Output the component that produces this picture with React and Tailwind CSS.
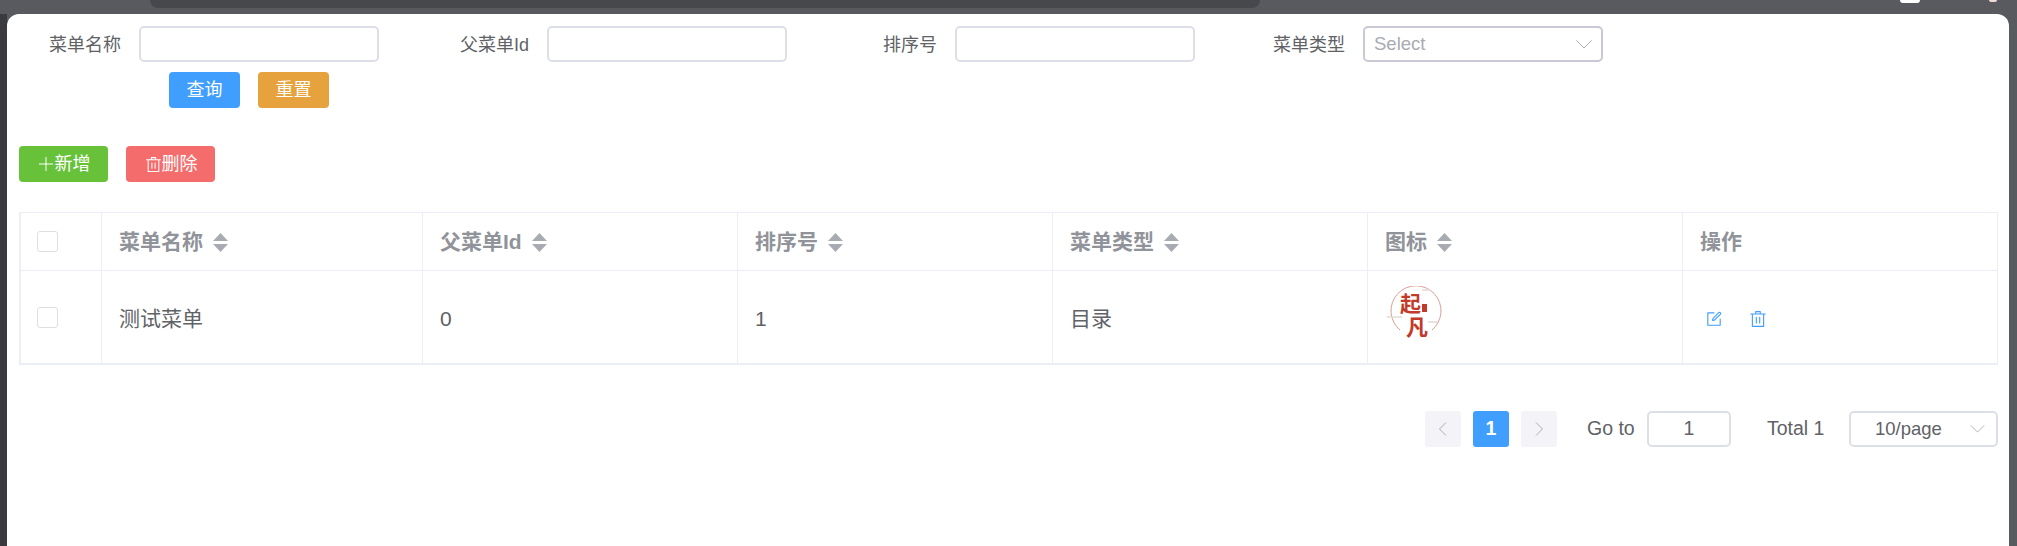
const font = "font-['Liberation_Sans','Noto_Sans_CJK_SC',sans-serif]";

const columns = [
  { name: "菜单名称", value: "测试菜单", width: "w-[321px]" },
  { name: "父菜单Id", value: "0", width: "w-[315px]" },
  { name: "排序号", value: "1", width: "w-[315px]" },
  { name: "菜单类型", value: "目录", width: "w-[315px]" },
];

function Chevron({ className }) {
  return (
    <svg className={className} viewBox="0 0 16 9" fill="none" stroke="currentColor" strokeWidth="1">
      <path d="M0.5 0.5 L8 8 L15.5 0.5" />
    </svg>
  );
}

function Arrow({ flip }) {
  return (
    <svg className="h-[14px] w-[8px]" viewBox="0 0 8 14" fill="none" stroke="currentColor" strokeWidth="1">
      <path d={flip ? "M1 0.5 L7.5 7 L1 13.5" : "M7 0.5 L0.5 7 L7 13.5"} />
    </svg>
  );
}

function DeleteIcon({ className }) {
  return (
    <svg className={className} viewBox="0 0 1024 1024" fill="currentColor">
      <path d="M160 256H96a32 32 0 0 1 0-64h256V95.936a32 32 0 0 1 32-32h256a32 32 0 0 1 32 32V192h256a32 32 0 1 1 0 64h-64v672a32 32 0 0 1-32 32H192a32 32 0 0 1-32-32V256zm448-64v-64H416v64h192zM224 896h576V256H224v640zm192-128a32 32 0 0 1-32-32V416a32 32 0 0 1 64 0v320a32 32 0 0 1-32 32zm192 0a32 32 0 0 1-32-32V416a32 32 0 0 1 64 0v320a32 32 0 0 1-32 32z" />
    </svg>
  );
}

function EditIcon({ className }) {
  return (
    <svg className={className} viewBox="0 0 1024 1024" fill="currentColor">
      <path d="M832 512a32 32 0 1 1 64 0v352a32 32 0 0 1-32 32H160a32 32 0 0 1-32-32V160a32 32 0 0 1 32-32h352a32 32 0 0 1 0 64H192v640h640V512z" />
      <path d="m469.952 554.24 52.8-7.552L847.104 222.4a32 32 0 1 0-45.248-45.248L477.44 501.44l-7.552 52.8zm422.4-422.4a96 96 0 0 1 0 135.808l-331.84 331.84a32 32 0 0 1-18.112 9.088L436.8 623.68a32 32 0 0 1-36.224-36.224l15.104-105.6a32 32 0 0 1 9.024-18.112l331.904-331.84a96 96 0 0 1 135.744 0z" />
    </svg>
  );
}

function Field({ label, select }) {
  return (
    <div className="flex items-center">
      <label className="mr-[18px] w-[90px] pt-[2px] text-right text-[18px] text-[#606266]">{label}</label>
      {select ? (
        <div className="flex h-[36px] w-[240px] items-center justify-between rounded-[5px] border-2 border-[#c8c9d4] pl-[9px] pr-[9px] text-[18.5px] text-[#a8abb2]">
          <span>Select</span>
          <Chevron className="h-[9px] w-[16px] text-[#a8abb2]" />
        </div>
      ) : (
        <input className="h-[36px] w-[240px] rounded-[5px] border-2 border-[#dcdfe6] bg-white" />
      )}
    </div>
  );
}

function SortIcon() {
  return (
    <svg className="ml-[10px] h-[19px] w-[15px]" viewBox="0 0 15 19">
      <path d="M7.5 0 L15 8 H0 Z M0 11 H15 L7.5 19 Z" fill="#a8abb2" />
    </svg>
  );
}

function Checkbox() {
  return <span className="block h-[21px] w-[21px] rounded-[3px] border border-[#dcdfe6] bg-white" />;
}

function Logo() {
  return (
    <svg width="62" height="62" viewBox="0 0 62 62">
      <path d="M15 44 A25 25 0 1 1 47 44" fill="none" stroke="#d9a096" strokeWidth="1" />
      <path d="M2 31 H17 M43 36 H53 M37 4 H45" stroke="#e2dbd6" strokeWidth="1.5" />
      <text x="15" y="25" fontSize="21" fontWeight="700" fill="#c23a2a" fontFamily="'Noto Sans CJK SC'">起</text>
      <rect x="37" y="18" width="5" height="8" fill="#c23a2a" />
      <text x="21" y="49" fontSize="22" fontWeight="700" fill="#c23a2a" fontFamily="'Noto Sans CJK SC'">凡</text>
    </svg>
  );
}

export default function App() {
  return (
    <div className={`${font} h-[546px] w-[2017px] overflow-hidden bg-[#595a60] pt-[14px]`}>
      <div className="absolute left-[150px] top-0 h-[8px] w-[1110px] rounded-b-[12px] bg-[#47484c]" />
      <div className="absolute left-[1900px] top-0 h-[3px] w-[20px] rounded-b-full bg-white" />
      <div className="absolute left-[1989px] top-0 h-[2px] w-[8px] rounded-b-full bg-[#f3d9d6]" />
      <div className="absolute left-0 top-[14px] h-[532px] w-[7px] bg-[#3a3b40]" />
      <div className="ml-[7px] h-[532px] w-[2002px] rounded-t-[12px] bg-white">
        <div className="flex gap-[60px] pl-[24px] pt-[12px]">
          <Field label="菜单名称" />
          <Field label="父菜单Id" />
          <Field label="排序号" />
          <Field label="菜单类型" select />
        </div>

        <div className="ml-[162px] mt-[10px] flex gap-[18px]">
          <button className="h-[36px] w-[71px] rounded-[4px] bg-[#409eff] text-[18px] text-white">查询</button>
          <button className="h-[36px] w-[71px] rounded-[4px] bg-[#e6a23c] text-[18px] text-white">重置</button>
        </div>

        <div className="ml-[12px] mt-[38px] flex gap-[18px]">
          <button className="flex h-[36px] w-[89px] items-center justify-center rounded-[4px] bg-[#67c23a] pl-[2px] text-[18px] text-white">
            <svg className="mr-[2px] h-[14px] w-[14px]" viewBox="0 0 14 14" stroke="currentColor" strokeWidth="1">
              <path d="M7 0 V14 M0 7 H14" />
            </svg>
            新增
          </button>
          <button className="flex h-[36px] w-[89px] items-center justify-center rounded-[4px] bg-[#f56c6c] pl-[1px] text-[18px] text-white">
            <DeleteIcon className="h-[17px] w-[17px]" />
            删除
          </button>
        </div>

        <div className="ml-[12px] mt-[30px] w-[1979px] border-y border-r border-l-2 border-b-2 border-[#ebeef5]">
          <div className="flex h-[58px] border-b border-[#ebeef5] text-[21px] font-bold text-[#909399]">
            <div className="flex w-[81px] items-center border-r border-[#ebeef5] pl-[16px]">
              <Checkbox />
            </div>
            {columns.map((col) => (
              <div key={col.name} className={`flex ${col.width} items-center border-r border-[#ebeef5] pl-[17px] pt-[1px]`}>
                {col.name}
                <SortIcon />
              </div>
            ))}
            <div className="flex w-[315px] items-center border-r border-[#ebeef5] pl-[17px] pt-[1px]">
              图标
              <SortIcon />
            </div>
            <div className="flex flex-1 items-center pl-[17px] pt-[1px]">操作</div>
          </div>
          <div className="flex h-[92px] text-[21px] text-[#606266]">
            <div className="flex w-[81px] items-center border-r border-[#ebeef5] pl-[16px]">
              <Checkbox />
            </div>
            {columns.map((col) => (
              <div key={col.name} className={`flex ${col.width} items-center border-r border-[#ebeef5] pl-[17px] pt-[3px]`}>
                {col.value}
              </div>
            ))}
            <div className="flex w-[315px] items-center border-r border-[#ebeef5] pl-[17px]">
              <Logo />
            </div>
            <div className="flex flex-1 items-center gap-[26px] pl-[22px] pt-[3px] text-[#409eff]">
              <EditIcon className="h-[18px] w-[18px]" />
              <DeleteIcon className="h-[18px] w-[18px]" />
            </div>
          </div>
        </div>

        <div className="ml-[1418px] mt-[46px] flex h-[36px] items-center text-[19.5px] text-[#606266]">
          <span className="flex h-[36px] w-[36px] items-center justify-center rounded-[3px] bg-[#f4f4f8] text-[#a8abb2]">
            <Arrow />
          </span>
          <span className="ml-[12px] flex h-[36px] w-[36px] items-center justify-center rounded-[3px] bg-[#409eff] font-bold text-white">1</span>
          <span className="ml-[12px] flex h-[36px] w-[36px] items-center justify-center rounded-[3px] bg-[#f4f4f8] text-[#a8abb2]">
            <Arrow flip />
          </span>
          <span className="ml-[30px] w-[48px] whitespace-nowrap">Go to</span>
          <span className="ml-[12px] flex h-[36px] w-[84px] items-center justify-center rounded-[5px] border-2 border-[#dcdfe6]">1</span>
          <span className="ml-[36px] w-[55px] whitespace-nowrap">Total 1</span>
          <span className="ml-[27px] flex h-[36px] w-[149px] items-center justify-between whitespace-nowrap rounded-[5px] border-2 border-[#dcdfe6] pl-[24px] pr-[11px] text-[18.5px]">
            10/page
            <Chevron className="h-[8px] w-[15px] text-[#a8abb2]" />
          </span>
        </div>
      </div>
    </div>
  );
}
